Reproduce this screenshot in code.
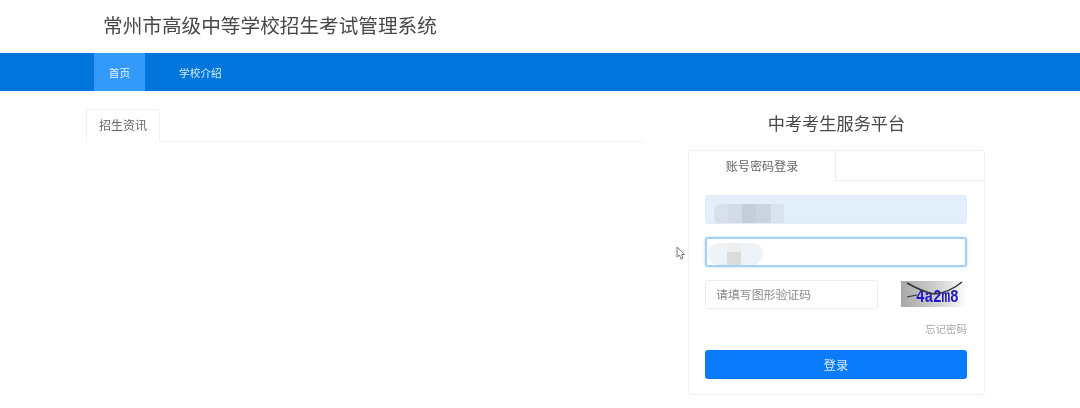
<div class="page">
  <header class="top"><h1>常州市高级中等学校招生考试管理系统</h1></header>
  <nav class="nav">
    <a class="item active" href="#home">首页</a>
    <a class="item" href="#school">学校介绍</a>
  </nav>
  <main class="main">
    <section class="news">
      <div class="news-tabs"><div class="news-tab">招生资讯</div></div>
    </section>
    <aside class="side">
      <svg class="cursor" width="11" height="15" viewBox="0 0 11 15" aria-hidden="true">
        <path d="M1 1 L1 11 L3.4 9 L5 13 L7 12.2 L5.4 8.6 L8.6 8.4 Z" fill="#fff" stroke="#667" stroke-width="0.9" stroke-linejoin="round"/>
      </svg>
      <h2>中考考生服务平台</h2>
      <div class="card">
        <div class="card-tabs">
          <div class="card-tab">账号密码登录</div>
          <div class="card-rest"></div>
        </div>
        <form class="form">
          <div class="field filled"><span class="smudge smudge-a"></span></div>
          <div class="field focused">
            <span class="smudge smudge-b"></span>
            <span class="mosaic"></span>
          </div>
          <div class="captcha-row">
            <div class="field small">请填写图形验证码</div>
            <div class="captcha">
              <span class="code">4a2m8</span>
              <svg viewBox="0 0 66 26" width="66" height="26" aria-hidden="true">
                <path d="M6 2 Q22 11 33 13 Q48 12 61 1" fill="none" stroke="#33333a" stroke-width="1.5"/>
                <path d="M6 16 L16 14" stroke="#33333a" stroke-width="1.2"/>
              </svg>
            </div>
          </div>
          <div class="forgot">忘记密码</div>
          <button type="button" class="login">登录</button>
        </form>
      </div>
    </aside>
  </main>
</div>

<style>
  :global(body) {
    margin: 0;
    background: #fff;
  }
  .page {
    width: 1080px;
    height: 408px;
    overflow: hidden;
    font-family: "Liberation Sans", "Noto Sans CJK SC", sans-serif;
    color: #555;
    filter: blur(0.55px);
  }
  .top {
    height: 53px;
    box-sizing: border-box;
    padding: 13px 0 0 103px;
  }
  h1 {
    margin: 0;
    font-size: 19.65px;
    line-height: 26px;
    font-weight: 400;
    color: #484848;
  }
  .nav {
    height: 38px;
    padding-left: 94px;
    display: flex;
    background: #0076dc;
  }
  .item {
    display: flex;
    align-items: center;
    justify-content: center;
    height: 100%;
    padding: 0 15px;
    color: #d5e9fb;
    font-size: 10.7px;
    text-decoration: none;
  }
  .item + .item {
    margin-left: 19px;
  }
  .active {
    width: 51px;
    padding: 0;
    background: #3399fb;
    color: #e6f3ff;
  }
  .main {
    display: flex;
    padding-left: 86px;
  }
  .news {
    width: 557px;
    padding-top: 18px;
  }
  .news-tabs {
    height: 32px;
    border-bottom: 1px solid #f0f0f0;
  }
  .news-tab {
    width: 74px;
    height: 33px;
    box-sizing: border-box;
    border: 1px solid #f0f0f0;
    border-bottom: 1px solid #fff;
    border-radius: 2px 2px 0 0;
    background: #fff;
    font-size: 12px;
    line-height: 33px;
    text-align: center;
    color: #666;
  }
  .side {
    position: relative;
    width: 297px;
    margin-left: 45px;
  }
  .cursor {
    position: absolute;
    left: -12px;
    top: 155px;
  }
  h2 {
    margin: 0;
    padding-top: 22px;
    height: 37px;
    font-size: 17.2px;
    line-height: 22px;
    font-weight: 400;
    text-align: center;
    color: #484848;
  }
  .card {
    height: 245px;
    box-sizing: border-box;
    border: 1px solid #f0f0f0;
    border-radius: 3px;
  }
  .card-tabs {
    display: flex;
    height: 30px;
  }
  .card-tab {
    width: 147px;
    box-sizing: border-box;
    border-right: 1px solid #ececec;
    font-size: 12.1px;
    line-height: 32px;
    text-align: center;
    color: #666;
  }
  .card-rest {
    flex: 1;
    border-bottom: 1px solid #ececec;
  }
  .form {
    display: flex;
    flex-direction: column;
    padding: 14px 17px 0 16px;
  }
  .field {
    position: relative;
    overflow: hidden;
    height: 29px;
    box-sizing: border-box;
    border: 1px solid #ececec;
    border-radius: 3px;
  }
  .filled {
    background: #e3eefb;
    border-color: #e0ebf8;
  }
  .focused {
    height: 30px;
    margin-top: 13px;
    border: 2px solid #a5cff6;
    background: #fff;
    box-shadow: 0 0 3px #b5d8f8;
    overflow: visible;
  }
  .smudge {
    position: absolute;
    display: block;
  }
  .smudge-a {
    left: 8px;
    top: 8px;
    width: 70px;
    height: 21px;
    border-radius: 8px 0 0 8px;
    background: linear-gradient(90deg,
      #d8e0ec 0 14px, #d3dbe7 14px 28px, #c3cddc 28px 42px, #cad4e1 42px 57px, #d9e2ee 57px 70px);
  }
  .smudge-b {
    left: 1px;
    top: 4px;
    width: 55px;
    height: 22px;
    background: #eef3f8;
    border-radius: 11px;
  }
  .mosaic {
    position: absolute;
    left: 20px;
    top: 4px;
    width: 14px;
    height: 22px;
    background: linear-gradient(180deg, #eeeeee 0 9px, #dcdcdc 9px);
  }
  .captcha-row {
    display: flex;
    margin-top: 13px;
    height: 29px;
  }
  .small {
    width: 173px;
    padding-left: 10px;
    font-size: 11.9px;
    line-height: 28px;
    color: #8a8a8a;
  }
  .captcha {
    position: relative;
    width: 66px;
    height: 26px;
    margin: 1px 0 0 23px;
    background: linear-gradient(90deg, #a8a8a8 0%, #c8c8c8 45%, #eeeeee 85%, #ffffff 100%);
    overflow: hidden;
  }
  .captcha svg {
    position: absolute;
    inset: 0;
  }
  .code {
    position: absolute;
    left: 15px;
    top: 5px;
    font-family: "Liberation Mono", monospace;
    font-size: 14.5px;
    line-height: 22px;
    font-weight: 700;
    letter-spacing: -0.2px;
    color: #2218c8;
    transform: scaleY(1.25);
  }
  .forgot {
    margin-top: 13px;
    height: 14px;
    font-size: 10.5px;
    line-height: 14px;
    text-align: right;
    color: #a8a8a8;
  }
  .login {
    margin-top: 14px;
    height: 29px;
    padding: 0;
    border: 0;
    border-radius: 3px;
    background: #0a7bfb;
    color: #dcecff;
    font: inherit;
    font-size: 12.4px;
  }
</style>
